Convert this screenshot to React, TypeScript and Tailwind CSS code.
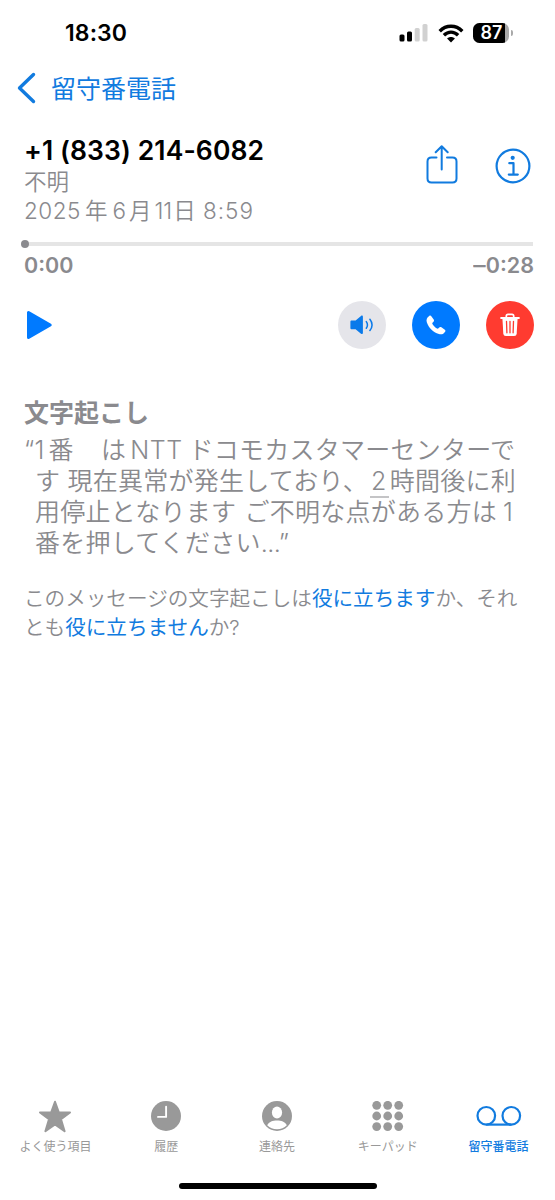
import React from 'react';

const SignalIcon = () => (
  <svg width="30" height="18" viewBox="0 0 30 18">
    <rect x="0.5" y="10.5" width="5" height="7" rx="1.5" fill="#000" />
    <rect x="8" y="7.5" width="5" height="10" rx="1.5" fill="#000" />
    <rect x="15.7" y="4" width="5" height="13.5" rx="1.5" fill="#d1d1d1" />
    <rect x="23.5" y="0" width="5" height="17.5" rx="1.5" fill="#d1d1d1" />
  </svg>
);

const WifiIcon = () => (
  <svg width="26" height="19" viewBox="0 0 26 19">
    <g fill="none" stroke="#000" strokeWidth="3.4">
      <path d="M1.7 7.2C8.2 0.6 17.8 0.6 24.3 7.2" />
      <path d="M5.9 11.2C10.1 7.1 15.9 7.1 20.1 11.2" />
    </g>
    <path d="M13 18.4L9.1 14.6C11.3 12.6 14.7 12.6 16.9 14.6Z" fill="#000" />
  </svg>
);

const BatteryIcon = () => (
  <div className="flex items-center gap-[2px]">
    <div className="flex h-[20px] w-[36px] overflow-hidden rounded-[6.5px] bg-[#a9a9a9]">
      <div className="flex w-[32px] items-center justify-center bg-black pl-[5px] text-[18px] leading-none font-semibold text-white">87</div>
    </div>
    <div className="h-[6px] w-[2px] rounded-r-full bg-[#a9a9a9]" />
  </div>
);

const ShareIcon = () => (
  <svg width="32" height="40" viewBox="0 0 32 40" fill="none" stroke="#117bdf" strokeWidth="2" strokeLinecap="round" strokeLinejoin="round">
    <path d="M10.5 12.5H5.5C3 12.5 1.5 14 1.5 16.5V33.5C1.5 36 3 37.5 5.5 37.5H26.5C29 37.5 30.5 36 30.5 33.5V16.5C30.5 14 29 12.5 26.5 12.5H21" />
    <path d="M15.7 24.5V1.5M9.7 7.3L15.7 1.3L21.7 7.3" />
  </svg>
);

const InfoIcon = () => (
  <svg width="36" height="36" viewBox="0 0 36 36" fill="none" stroke="#117bdf" strokeWidth="2.2">
    <circle cx="18" cy="18" r="16.4" />
    <circle cx="17.7" cy="9.8" r="2.1" fill="#117bdf" stroke="none" />
    <path d="M14.3 15.2H18.5V26.4M13.8 26.6H22.8" strokeLinejoin="round" strokeLinecap="round" />
  </svg>
);

const SpeakerIcon = () => (
  <svg width="24" height="20" viewBox="0 0 24 20">
    <path d="M1.8 5.5H5.6L11 0.9C12 0.2 12.9 0.7 12.9 1.8V17.8C12.9 18.9 12 19.4 11 18.7L5.6 14.3H1.8C0.9 14.3 0.4 13.8 0.4 12.9V6.9C0.4 6 0.9 5.5 1.8 5.5Z" fill="#0a7aea" />
    <path d="M16.3 6.6C17.7 8.6 17.7 11.2 16.3 13.2M19.9 4.3C22.6 7.8 22.6 12 19.9 15.5" fill="none" stroke="#0a7aea" strokeWidth="1.5" strokeLinecap="round" />
  </svg>
);

const PhoneIcon = () => (
  <svg width="20" height="20" viewBox="0 0 20 20">
    <path d="M3.2 0.9C4 0.3 4.9 0.5 5.5 1.4L7.7 4.6C8.2 5.4 8.1 6.1 7.5 6.8L6.5 7.8C6.2 8.2 6.2 8.6 6.4 9C7.4 10.7 9.3 12.6 11 13.6C11.4 13.8 11.9 13.8 12.2 13.5L13.2 12.5C13.8 11.9 14.6 11.8 15.4 12.3L18.5 14.5C19.5 15.2 19.7 16 19.1 16.8C17.7 19 15.6 19.9 12.9 19C7 17 2.7 12.8 0.8 7.2C0 4.6 0.9 2.4 3.2 0.9Z" fill="#fff" />
  </svg>
);

const TrashIcon = () => (
  <svg width="20" height="24" viewBox="0 0 20 24">
    <path d="M6.3 4.3V3C6.3 2 6.9 1.3 8 1.3H12C13.1 1.3 13.7 2 13.7 3V4.3" fill="none" stroke="#fff" strokeWidth="1.7" />
    <path d="M1.1 5H18.9" stroke="#fff" strokeWidth="2" strokeLinecap="round" />
    <path d="M2.4 5H17.6L16.7 20.5C16.6 22.2 15.6 23 14.1 23H5.9C4.4 23 3.4 22.2 3.3 20.5Z" fill="#fff" />
    <path d="M6.5 8.3L6.9 19.8M10 8.3V19.8M13.5 8.3L13.1 19.8" stroke="#ff3b30" strokeWidth="1.3" strokeLinecap="round" />
  </svg>
);

const StarIcon = () => (
  <svg width="34" height="33" viewBox="0 0 34 33">
    <path d="M17 1.8L20.7 12.2L32 12.4L23 19.2L26.6 31.2L17 24.4L7.4 31.2L11 19.2L2 12.4L13.3 12.2Z" fill="#999" stroke="#999" strokeWidth="2" strokeLinejoin="round" />
  </svg>
);

const ClockIcon = () => (
  <svg width="30" height="30" viewBox="0 0 30 30">
    <circle cx="15" cy="15" r="15" fill="#999" />
    <path d="M15.1 5.8V15.9H7" fill="none" stroke="#fff" strokeWidth="1.9" strokeLinecap="round" strokeLinejoin="round" />
  </svg>
);

const ContactIcon = () => (
  <svg width="30" height="30" viewBox="0 0 30 30">
    <circle cx="15" cy="15" r="15" fill="#999" />
    <ellipse cx="15" cy="11.5" rx="5.1" ry="5.9" fill="#fff" />
    <path d="M5.2 24.3C7 20.8 10.7 19.5 15 19.5S23 20.8 24.8 24.3C22.3 26.9 18.9 28.3 15 28.3S7.7 26.9 5.2 24.3Z" fill="#fff" />
  </svg>
);

const KeypadIcon = () => (
  <svg width="32" height="30" viewBox="0 0 32 30" fill="#999">
    {[4.7, 15.7, 26.7].map((x) =>
      [4.3, 15, 25.6].map((y) => <circle key={`${x}-${y}`} cx={x} cy={y} r="4.4" />)
    )}
  </svg>
);

const VoicemailIcon = () => (
  <svg width="46" height="22" viewBox="0 0 46 22" fill="none" stroke="#117bdf" strokeWidth="2.2">
    <circle cx="10.3" cy="10.8" r="8.8" />
    <circle cx="35.3" cy="10.8" r="8.8" />
    <path d="M10.3 19.6H35.3" />
  </svg>
);

const App = () => {
  const tabs = [
    { icon: StarIcon, label: 'よく使う項目', color: 'text-[#999]' },
    { icon: ClockIcon, label: '履歴', color: 'text-[#999]' },
    { icon: ContactIcon, label: '連絡先', color: 'text-[#999]' },
    { icon: KeypadIcon, label: 'キーパッド', color: 'text-[#999]' },
    { icon: VoicemailIcon, label: '留守番電話', color: 'text-[#117bdf] font-medium' }
  ];

  return (
    <div lang="ja" className="flex h-[1200px] w-[555px] flex-col overflow-hidden bg-white font-['Inter','Noto_Sans_CJK_JP',sans-serif] whitespace-nowrap text-[#8a8a8e]">
      {/* Status bar */}
      <div className="flex h-[66px] items-center justify-between pr-[42px] pl-[65px] text-black">
        <span className="pt-px text-[23px] font-semibold tracking-[0.1px]">18:30</span>
        <div className="flex items-center gap-[9px]">
          <SignalIcon />
          <WifiIcon />
          <BatteryIcon />
        </div>
      </div>

      {/* Back link */}
      <div className="flex h-[44px] items-center gap-[14px] pl-[17px] text-[#117bdf]">
        <svg width="20" height="32" viewBox="0 0 20 32" fill="none" stroke="#117bdf" strokeWidth="3.4" strokeLinecap="round" strokeLinejoin="round">
          <path d="M16.5 2.5L2.5 16L16.5 29.5" />
        </svg>
        <span className="pt-[2px] text-[25px] leading-none">留守番電話</span>
      </div>

      {/* Caller */}
      <div className="flex h-[116px] justify-between pt-[24px] pr-[24px] pl-[24px]">
        <div className="font-['Inter','Noto_Sans_CJK_JP_DemiLight','Noto_Sans_CJK_JP',sans-serif] font-[350]">
          <div className="h-[33px] text-[26.5px] leading-[33px] font-semibold tracking-[0.1px] text-black">+1 (833) 214-6082</div>
          <div className="h-[29px] text-[22.5px] leading-[30px]">不明</div>
          <div className="h-[29px] text-[22.5px] leading-[30px]">
            <span className="tracking-[0.5px]">2025</span>
            <span className="mr-[5px] ml-[4px]">年</span>6<span className="mx-[3px]">月</span>11<span className="mx-px">日</span> <span className="tracking-[1px]">8:59</span>
          </div>
        </div>
        <div className="flex gap-[37px] pt-[11px]">
          <ShareIcon />
          <div className="pt-[3px]"><InfoIcon /></div>
        </div>
      </div>

      {/* Scrubber */}
      <div className="flex items-center pt-[14px] pr-[22px] pl-[21px]">
        <div className="h-[8px] w-[8px] rounded-full bg-[#8a8a8e]" />
        <div className="h-[4px] flex-1 bg-[#e5e5e5]" />
      </div>
      <div className="flex h-[34px] items-center justify-between pt-px pr-[21px] pl-[24px] text-[21.5px] font-semibold">
        <span>0:00</span>
        <span><span className="mr-px inline-block scale-x-115">–</span>0:28</span>
      </div>

      {/* Playback controls */}
      <div className="flex h-[86px] items-center justify-between pr-[21px] pl-[26px]">
        <svg width="27" height="30" viewBox="0 0 27 30">
          <path d="M2.5 2.5V27.5L24.2 15Z" fill="#007aff" stroke="#007aff" strokeWidth="3" strokeLinejoin="round" />
        </svg>
        <div className="flex gap-[26px]">
          <div className="flex h-[48px] w-[48px] items-center justify-center rounded-full bg-[#e5e5ea]"><SpeakerIcon /></div>
          <div className="flex h-[48px] w-[48px] items-center justify-center rounded-full bg-[#007aff]"><PhoneIcon /></div>
          <div className="flex h-[48px] w-[48px] items-center justify-center rounded-full bg-[#ff3b30]"><TrashIcon /></div>
        </div>
      </div>

      {/* Transcript */}
      <div className="pt-[29px] pl-[24px] font-['Inter','Noto_Sans_CJK_JP_DemiLight','Noto_Sans_CJK_JP',sans-serif] font-[350]">
        <h2 className="h-[38px] font-['Inter','Noto_Sans_CJK_JP',sans-serif] text-[25px] leading-[32px] font-bold">文字起こし</h2>
        <div className="text-[25px] leading-[31px] tracking-[0.25px]">
          <div>“1<span className="ml-[4px]">番　</span><span className="ml-[2px]">は</span><span className="mr-[6px] ml-[4px] tracking-[0.5px]">NTT</span>ドコモカスタマーセンターで</div>
          <div className="pl-[11px]">
            す 現在異常が発生しており、<span className="mr-px ml-[2px] border-b-2 border-[#c4c4c6] pr-[2px] pl-px leading-none">2</span>時間後に利
          </div>
          <div className="pl-[11px]">用停止となります <span className="ml-px">ご不明な点がある方は</span><span className="ml-[6px]">1</span></div>
          <div className="pl-[11px]">番を押してください<span className="tracking-[-0.6px]">...”</span></div>
        </div>
        <div className="pt-[25px] text-[20.6px] leading-[29px]">
          <div>このメッセージの文字起こしは<span className="font-['Inter','Noto_Sans_CJK_JP',sans-serif] font-normal text-[#117bdf]">役に立ちます</span>か、それ</div>
          <div>とも<span className="font-['Inter','Noto_Sans_CJK_JP',sans-serif] font-normal text-[#117bdf]">役に立ちません</span>か?</div>
        </div>
      </div>

      {/* Tab bar */}
      <div className="mt-auto grid h-[84px] grid-cols-5 pr-px">
        {tabs.map((tab) => (
          <div key={tab.label} className={`flex flex-col items-center ${tab.color}`}>
            <div className="flex h-[34px] items-center"><tab.icon /></div>
            <div className="pt-[6px] text-[12px] leading-[16px]">{tab.label}</div>
          </div>
        ))}
      </div>
      <div className="flex h-[17px] justify-center">
        <div className="h-[6px] w-[198px] rounded-full bg-black" />
      </div>
    </div>
  );
};

export default App;
